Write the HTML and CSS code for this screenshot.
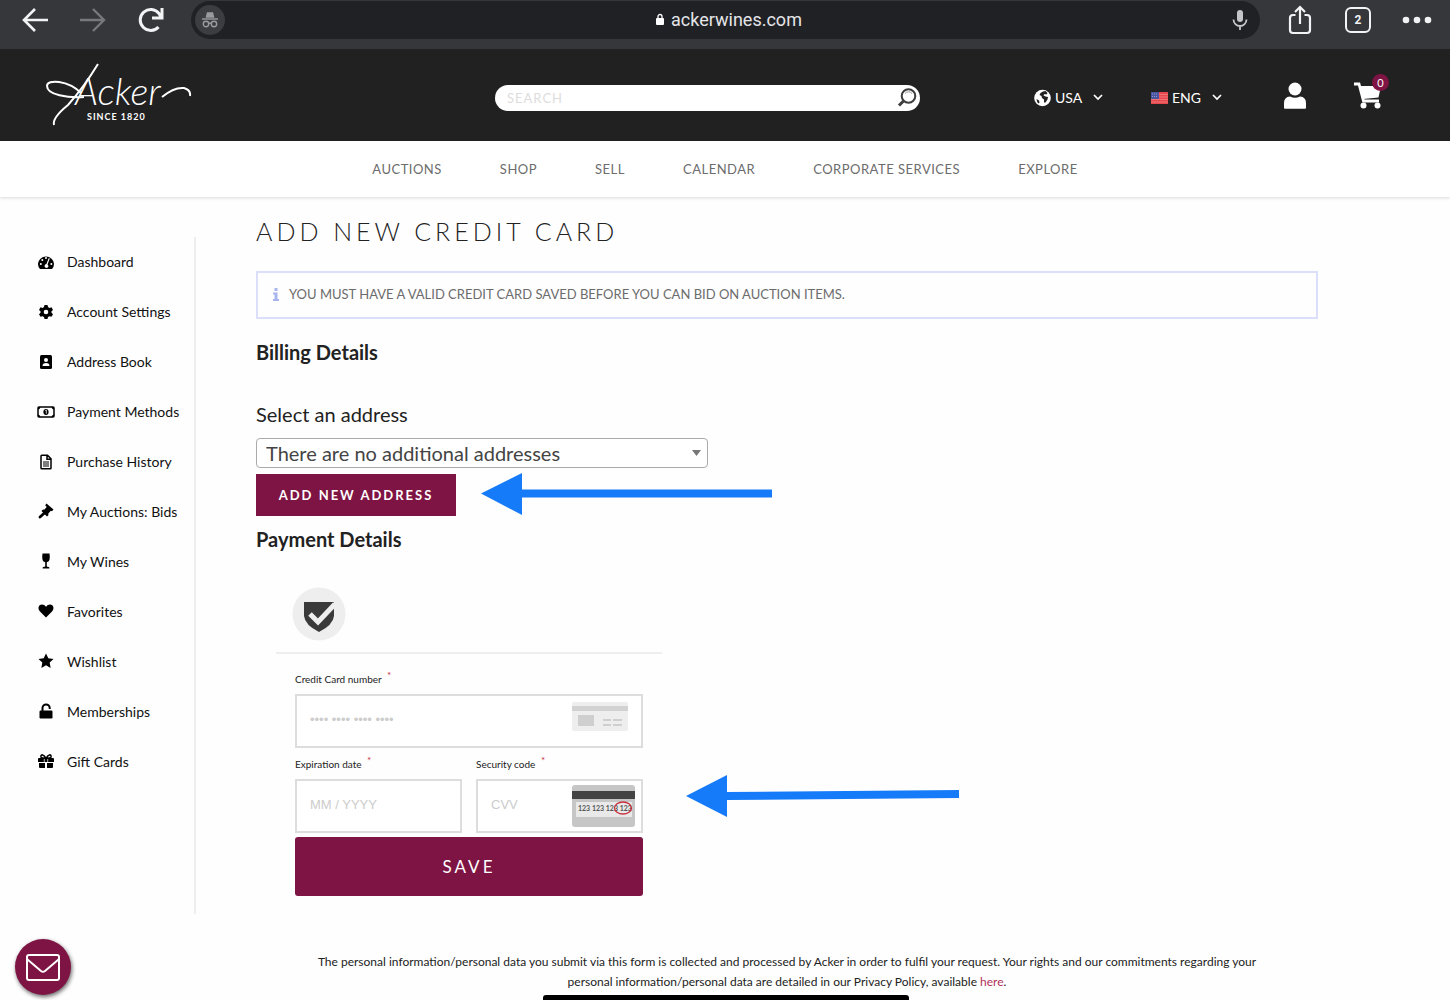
FILE: index.html
```html
<!DOCTYPE html>
<html lang="en">
<head>
  <meta charset="UTF-8" />
  <meta name="viewport" content="width=device-width, initial-scale=1.0"/>
  <title>Add New Credit Card</title>
  <link rel="stylesheet" href="styles.css">
</head>
<body>
<div class="browser-bar">
  <button class="bar-btn" aria-label="Back"><svg width="28" height="26" viewBox="0 0 28 26" fill="none" stroke="#f1f3f4" stroke-width="2.6"><path d="M27 13H3M14 2L3 13l11 11"/></svg></button>
  <button class="bar-btn" aria-label="Forward"><svg width="28" height="26" viewBox="0 0 28 26" fill="none" stroke="#77787b" stroke-width="2.4"><path d="M1 13h24M14 2l11 11-11 11"/></svg></button>
  <button class="bar-btn" aria-label="Reload"><svg width="28" height="26" viewBox="0 0 28 26" fill="none" stroke="#f1f3f4" stroke-width="3"><path d="M21.500 20A10.500 10.500 0 1 1 22 6.500L24 10M25 1v10H15"/></svg></button>
  <div class="address-bar">
    <span class="incognito">
      <svg width="18" height="18" viewBox="0 0 18 18" fill="none" stroke="#9a9b9e" stroke-width="1.4"><path d="M5.500 6L6.500 2h5l1 4z" fill="#9a9b9e"/><path d="M1 8h16"/><circle cx="5" cy="13" r="2.700"/><circle cx="13" cy="13" r="2.700"/><path d="M7.700 12.500q1.300-1 2.600 0"/></svg>
    </span>
    <span class="address">
      <svg width="10" height="13" viewBox="0 0 10 13"><rect x="1" y="5" width="8" height="7" rx="1" fill="#fff"/><path d="M3 5.500V3.500a2 2 0 0 1 4 0v2" fill="none" stroke="#fff" stroke-width="1.300"/></svg>
      ackerwines.com
    </span>
    <button class="bar-btn mic" aria-label="Voice search"><svg width="16" height="22" viewBox="0 0 16 22"><rect x="5" y="1" width="6" height="12" rx="3" fill="#c4c5c8"/><path d="M1.500 10.500a6.500 6.500 0 0 0 13 0M8 17v4" fill="none" stroke="#c4c5c8" stroke-width="1.800"/></svg></button>
  </div>
  <button class="bar-btn" aria-label="Share"><svg width="24" height="30" viewBox="0 0 24 30" fill="none" stroke="#f1f3f4" stroke-width="2.200"><path d="M7.500 10H5a3 3 0 0 0-3 3v12a3 3 0 0 0 3 3h14a3 3 0 0 0 3-3V13a3 3 0 0 0-3-3h-2.500M12 19V2M7 7l5-5 5 5"/></svg></button>
  <button class="tabs-btn" aria-label="Tabs">2</button>
  <button class="bar-btn" aria-label="More"><svg width="30" height="8" viewBox="0 0 30 8" fill="#f1f3f4"><circle cx="4" cy="4" r="3.300"/><circle cx="15" cy="4" r="3.300"/><circle cx="26" cy="4" r="3.300"/></svg></button>
</div>

<header class="header">
  <a class="logo" href="#" aria-label="Acker since 1820">
    <svg width="146" height="64" viewBox="0 0 146 64">
      <path d="M38 34C22 35 1 32 1 23C1 16 22 17 35 30M52 1Q38 24 22 42Q6 55 8 62" fill="none" stroke="#fff" stroke-width="2"/>
      <text x="29" y="42" class="logo-name">Acker</text>
      <path d="M116 34Q128 24 138 25Q145 27 144 33" fill="none" stroke="#fff" stroke-width="2"/>
      <text x="41" y="57" class="logo-since">SINCE 1820</text>
    </svg>
  </a>
  <form class="search">
    <input type="text" placeholder="SEARCH" aria-label="Search">
    <button type="button" aria-label="Search"><svg width="20" height="20" viewBox="0 0 20 20" fill="none" stroke="#3d3d3d"><circle cx="11.500" cy="8" r="6.800" stroke-width="2"/><path d="M8 5.500a4.500 4.500 0 0 1 7 0" stroke="#999" stroke-width="1"/><path d="M6.500 13L2 17.500" stroke-width="3"/></svg></button>
  </form>
  <div class="header-tools">
    <label class="picker">
      <svg width="17" height="18" viewBox="0 0 17 18"><circle cx="8.500" cy="9" r="8.300" fill="#fff"/><path d="M9 2.500l2.500-.5 2 2-1 1.500-2-.5-1 1.500 2 1 2.500.5-.5 2.500-2 3-1.500 0 0-3-2-1.500-.5-2-2-1 1-2z" fill="#222"/><path d="M2.500 10l2.500 1.500.5 2-1 1q-1.800-1.500-2-4.500z" fill="#222"/></svg>
      <select aria-label="Country"><option>USA</option></select>
      <svg class="chev" width="10" height="7" viewBox="0 0 10 7" fill="none" stroke="#fff" stroke-width="1.700"><path d="M1 1l4 4 4-4"/></svg>
    </label>
    <label class="picker picker-lang">
      <svg width="17" height="12" viewBox="0 0 17 12"><rect width="17" height="12" fill="#e5484d"/><path d="M0 2.500h17M0 5h17M0 7.500h17M0 10h17" stroke="#f08a8a" stroke-width=".7"/><rect width="8" height="7" fill="#4a55a0"/><path d="M1 2h6M1 4.500h6" stroke="#a5abd8" stroke-width=".8" stroke-dasharray="1 1"/></svg>
      <select aria-label="Language"><option>ENG</option></select>
      <svg class="chev" width="10" height="7" viewBox="0 0 10 7" fill="none" stroke="#fff" stroke-width="1.700"><path d="M1 1l4 4 4-4"/></svg>
    </label>
    <a class="user" href="#" aria-label="My account"><svg width="24" height="27" viewBox="0 0 24 27" fill="#fff"><circle cx="12" cy="7" r="6.500"/><path d="M1 26v-5q0-6 6-6.500Q12 17 17 14.500q6 .5 6 6.500v5q0 .8-1 .8H2q-1 0-1-.8z"/></svg></a>
    <a class="cart" href="#" aria-label="Cart"><svg width="29" height="27" viewBox="0 0 29 27"><path d="M1 2h5l4.500 17H26" fill="none" stroke="#fff" stroke-width="2.800"/><path d="M6 4h22l-2.500 11.500L10 17z" fill="#fff"/><circle cx="10.500" cy="23.500" r="3" fill="#fff"/><circle cx="24.500" cy="23.500" r="3" fill="#fff"/></svg><span class="badge">0</span></a>
  </div>
</header>

<nav class="nav">
  <a href="#">AUCTIONS</a>
  <a href="#">SHOP</a>
  <a href="#">SELL</a>
  <a href="#">CALENDAR</a>
  <a href="#">CORPORATE SERVICES</a>
  <a href="#">EXPLORE</a>
</nav>

<div class="page">
  <aside class="sidebar">
    <a href="#"><svg viewBox="0 0 18 16"><path d="M3 15A8 7.500 0 1 1 15 15z"/><g fill="#fff"><circle cx="3.800" cy="10" r="1"/><circle cx="5.300" cy="6" r="1"/><circle cx="9" cy="4" r="1"/><circle cx="14.300" cy="10" r="1"/><path d="M11.800 4l1 .4-2.300 6a1.900 1.900 0 1 1-1.100-.3z"/></g></svg>Dashboard</a>
    <a href="#"><svg viewBox="0 0 18 16"><path d="M7.500 1h3l.5 2 1.500.9 2-.6 1.500 2.600-1.500 1.400v1.500l1.500 1.400-1.500 2.600-2-.6-1.500.9-.5 2h-3L7 13.100l-1.500-.9-2 .6L2 10.200l1.500-1.400V7.300L2 5.900l1.500-2.600 2 .6L7 3z"/><circle cx="9" cy="8" r="2.300" fill="#fff"/></svg>Account Settings</a>
    <a href="#"><svg viewBox="0 0 18 16"><rect x="3" y="1" width="12" height="14" rx="1.500"/><circle cx="9" cy="6" r="2" fill="#fff"/><path d="M5.500 12q0-3 3.500-3t3.500 3z" fill="#fff"/></svg>Address Book</a>
    <a href="#"><svg viewBox="0 0 18 16"><rect x="1" y="3" width="16" height="10" rx="1" fill="none" stroke="#000" stroke-width="1.500"/><path d="M1 5.500q2 0 2.500-2.500H1zM17 5.500q-2 0-2.500-2.500H17zM1 10.500q2 0 2.500 2.500H1zM17 10.500q-2 0-2.500 2.500H17z"/><ellipse cx="9" cy="8" rx="2.600" ry="3"/><path d="M8.300 6.500L9.300 6v3.700" stroke="#fff" stroke-width=".8" fill="none"/></svg>Payment Methods</a>
    <a href="#"><svg viewBox="0 0 18 16"><path d="M4 2q0-.8.800-.8h5.700L14 4.700V14q0 .8-.8.800H4.800Q4 14.800 4 14zM10 1.500v3.700h3.700" fill="none" stroke="#000" stroke-width="1.500"/><path d="M6 8h6M6 10h6M6 12h6" stroke="#000" stroke-width="1"/></svg>Purchase History</a>
    <a href="#"><svg viewBox="0 0 18 16"><path d="M9.500 0.500l7 6-1.500 1.700-1.200-.4-2.600 2.900.3 1.200-1.500 1.500L4.500 8l1.500-1.500 1.200.3L9.700 4 8.200 2.200z"/><path d="M8 9.500L3 14" stroke="#000" stroke-width="2.800" stroke-linecap="round"/></svg>My Auctions: Bids</a>
    <a href="#"><svg viewBox="0 0 18 16"><path d="M5.500 0.500h7q1.300 8-2.700 8.700v4.300l2.500.7v1.300H5.700v-1.300l2.500-.7V9.200q-4-.7-2.700-8.700z"/></svg>My Wines</a>
    <a href="#"><svg viewBox="0 0 18 16"><path d="M9 14.500L3 8.500C0 5 2 1.500 5 1.500q2.500 0 4 2.200q1.500-2.200 4-2.200c3 0 5 3.500 2 7z"/></svg>Favorites</a>
    <a href="#"><svg viewBox="0 0 18 16"><path d="M9 0.500l2.300 4.800 5.200.7-3.800 3.600.9 5.300L9 12.300l-4.600 2.600.9-5.300L1.500 6l5.200-.7z"/></svg>Wishlist</a>
    <a href="#"><svg viewBox="0 0 18 16"><rect x="2.500" y="7.500" width="13" height="8" rx="1.200"/><path d="M5.500 8V5a3.600 3.600 0 0 1 7.200 0v1" fill="none" stroke="#000" stroke-width="2"/></svg>Memberships</a>
    <a href="#"><svg viewBox="0 0 18 16"><path d="M2 5h14q1 0 1 1v3H1V6q0-1 1-1zM2 10h6v5H3q-1 0-1-1zM10 10h6v4q0 1-1 1h-5z"/><path d="M9 5.500C7 1 3.500 1 4 4q.3 1.300 5 1.500C11 1 14.500 1 14 4q-.3 1.300-5 1.500" fill="none" stroke="#000" stroke-width="1.600"/><path d="M7.300 6v3M10.700 6v3" stroke="#fff" stroke-width=".7"/></svg>Gift Cards</a>
  </aside>

  <main class="content">
    <h1>ADD NEW CREDIT CARD</h1>
    <div class="notice">
      <svg width="6" height="13" viewBox="0 0 6 13" fill="#a9b6ee"><rect x="1.500" width="3" height="3"/><path d="M0 4.500h4.500V11H6v2H0v-2h1.500V6.500H0z"/></svg>
      YOU MUST HAVE A VALID CREDIT CARD SAVED BEFORE YOU CAN BID ON AUCTION ITEMS.
    </div>

    <h2>Billing Details</h2>
    <label class="address-label" for="addressSelect">Select an address</label>
    <div class="address-select">
      <select id="addressSelect"><option>There are no additional addresses</option></select>
      <svg width="9" height="6" viewBox="0 0 9 6" fill="#777"><path d="M0 0h9L4.500 6z"/></svg>
    </div>
    <div class="pointer-row">
      <button class="add-btn">ADD NEW ADDRESS</button>
      <svg class="arrow arrow-address" width="291" height="42" viewBox="0 0 291 42" fill="#167bf8"><path d="M0 20.500L41 0v16.500h250v8H41V42z"/></svg>
    </div>

    <h2>Payment Details</h2>
    <form class="card-form">
      <div class="secure">
        <svg width="54" height="54" viewBox="0 0 54 54"><circle cx="27" cy="27" r="26.500" fill="#eee"/><path d="M12 15h30v14q-1 9-15 16q-14-7-15-16z" fill="#3a3a3a"/><path d="M18 27l8 8 17-18" fill="none" stroke="#eee" stroke-width="5"/></svg>
      </div>
      <div class="fields">
        <div class="field field-wide">
          <label for="cardNumber">Credit Card number <sup>*</sup></label>
          <div class="input-box">
            <input type="text" id="cardNumber" placeholder="•••• •••• •••• ••••">
            <svg width="63" height="42" viewBox="0 0 63 42"><rect y="2" width="56" height="29" rx="2" fill="#eee"/><path d="M0 6h56v5H0z" fill="#d2d2d2"/><path d="M6 15h16v11H6z" fill="#cfcfcf"/><path d="M31 20h8M41 20h9M31 25h8M41 25h9" stroke="#cfcfcf" stroke-width="2"/></svg>
          </div>
        </div>
        <div class="field">
          <label for="expiry">Expiration date <sup>*</sup></label>
          <div class="input-box"><input type="text" id="expiry" placeholder="MM / YYYY"></div>
        </div>
        <div class="field">
          <label for="cvv">Security code <sup>*</sup></label>
          <div class="input-box">
            <input type="text" id="cvv" placeholder="CVV">
            <svg width="63" height="42" viewBox="0 0 63 42"><rect width="63" height="42" rx="3" fill="#c6c6c6"/><path d="M0 6h63v8H0z" fill="#444"/><path d="M4 17h56v15H4z" fill="#e9e9e9"/><text x="6" y="26" class="card-digits">123 123 123 123</text><ellipse cx="51" cy="23" rx="8.500" ry="6" fill="none" stroke="#c9303e" stroke-width="1.300"/></svg>
          </div>
          <svg class="arrow arrow-card" width="273" height="42" viewBox="0 0 273 42" fill="#167bf8"><path d="M0 21L41 0v17l232-2v8L41 25v17z"/></svg>
        </div>
      </div>
      <button class="save-btn" type="button">SAVE</button>
    </form>

    <p class="privacy">The personal information/personal data you submit via this form is collected and processed by Acker in order to fulfil your request. Your rights and our commitments regarding your personal information/personal data are detailed in our Privacy Policy, available <a href="#">here</a>.</p>
  </main>
</div>

<button class="mail-btn" aria-label="Contact us"><svg width="34" height="27" viewBox="0 0 34 27" fill="none" stroke="#fff" stroke-width="2"><rect x="1" y="1" width="32" height="25" rx="2"/><path d="M1.500 5.500L15 17q2 1.500 4 0L32.500 5.500"/></svg></button>
<div class="home-indicator"></div>
</body>
</html>
```
FILE: styles.css
```css
* {
  box-sizing: border-box;
}
body {
  margin: 0;
  background-color: #fefefe;
  color: #222;
  font-family: Lato, 'Open Sans', sans-serif;
}
a {
  color: inherit;
  text-decoration: none;
}
button, input, select {
  font-family: inherit;
  border: none;
  padding: 0;
  background: none;
}
button {
  cursor: pointer;
}
svg {
  display: block;
  flex-shrink: 0;
}

/* browser bar */
.browser-bar {
  height: 49px;
  background-color: #36373b;
  display: flex;
  align-items: center;
  gap: 30px;
  padding: 0 18px 10px 21px;
}
.address-bar {
  flex: 1;
  height: 38px;
  margin: 0 -2px 0 -4px;
  border-radius: 19px;
  background-color: #202125;
  display: flex;
  align-items: center;
  justify-content: space-between;
  padding: 0 12px 0 4px;
}
.incognito {
  width: 30px;
  height: 30px;
  border-radius: 50%;
  background-color: #3c3d41;
  display: flex;
  align-items: center;
  justify-content: center;
}
.address {
  display: flex;
  align-items: center;
  gap: 6px;
  font-family: Roboto, sans-serif;
  font-size: 18px;
  color: #e4e5e8;
}
.tabs-btn {
  width: 26px;
  height: 26px;
  margin: 0 1px 0 3px;
  border: 2px solid #f1f3f4;
  border-radius: 6px;
  color: #f1f3f4;
  font-family: Roboto, sans-serif;
  font-size: 12px;
  font-weight: bold;
}

/* site header */
.header {
  height: 92px;
  background-color: #212121;
  display: flex;
  align-items: center;
  padding: 0 68px 0 46px;
}
.logo-name {
  font-size: 38px;
  font-weight: 300;
  font-style: italic;
  fill: #fff;
}
.logo-since {
  font-size: 9px;
  font-weight: bold;
  letter-spacing: 1px;
  fill: #fff;
}
.search {
  width: 425px;
  height: 26px;
  margin: 6px auto 0 303px;
  border-radius: 13px;
  background-color: #fff;
  display: flex;
  align-items: center;
  padding: 0 3px 0 12px;
}
.search input {
  flex: 1;
  font-size: 13px;
  letter-spacing: 1px;
  outline: none;
}
.search input::placeholder {
  color: #ddd;
}
.header-tools {
  display: flex;
  align-items: center;
  color: #fff;
}
.picker {
  display: flex;
  align-items: center;
  gap: 4px;
  margin: 5px 48px 0 0;
}
.picker-lang {
  margin-right: 61px;
}
.picker select {
  appearance: none;
  color: #fff;
  font-size: 14px;
}
.chev {
  margin-left: 6px;
}
.cart {
  position: relative;
  margin-left: 46px;
}
.badge {
  position: absolute;
  top: -8px;
  right: -7px;
  width: 17px;
  height: 17px;
  border-radius: 50%;
  background-color: #7e1443;
  font-size: 11px;
  line-height: 17px;
  text-align: center;
}
.nav {
  height: 56px;
  background-color: #fff;
  box-shadow: 0 1px 3px rgba(0,0,0,0.15);
  display: flex;
  justify-content: center;
  align-items: center;
  gap: 58px;
  font-size: 13px;
  letter-spacing: 0.5px;
  color: #6c6c6c;
}

/* account page */
.page {
  display: flex;
}
.sidebar {
  width: 196px;
  height: 677px;
  margin-top: 40px;
  padding-bottom: 128px;
  border-right: 2px solid #eee;
  flex-shrink: 0;
  display: flex;
  flex-direction: column;
}
.sidebar a {
  flex: 1;
  display: flex;
  align-items: center;
  gap: 12px;
  padding-left: 37px;
  font-size: 14px;
  color: #111;
}
.sidebar svg {
  width: 18px;
  height: 16px;
}
.content {
  flex: 1;
  margin: 0 132px 0 60px;
}
h1 {
  margin: 17px 0 23px;
  font-size: 25px;
  line-height: 34px;
  font-weight: 300;
  letter-spacing: 4px;
}
.notice {
  height: 48px;
  border: 2px solid #dcdffa;
  display: flex;
  align-items: center;
  gap: 10px;
  padding: 0 15px 2px;
  font-size: 13px;
  color: #6c6c6c;
}
h2 {
  margin: 20px 0 0;
  font-size: 20px;
  line-height: 26px;
}
.address-label {
  display: block;
  margin: 36px 0 11px;
  font-size: 20px;
  line-height: 26px;
}
.address-select {
  position: relative;
  width: 452px;
}
.address-select select {
  appearance: none;
  width: 100%;
  height: 30px;
  padding-left: 9px;
  border: 1px solid #aaa;
  border-radius: 4px;
  background-color: #fff;
  color: #444;
  font-size: 20px;
}
.address-select svg {
  position: absolute;
  right: 7px;
  top: 12px;
}
.pointer-row {
  position: relative;
  margin: 6px 0 -10px;
}
.add-btn {
  display: block;
  width: 200px;
  height: 42px;
  background-color: #7e1443;
  color: #fff;
  font-size: 13px;
  font-weight: bold;
  letter-spacing: 2px;
}
.arrow {
  position: absolute;
}
.arrow-address {
  left: 225px;
  top: -1px;
}

/* card form */
.card-form {
  width: 386px;
  margin: 35px 0 0 20px;
}
.secure {
  padding: 0 0 11px 16px;
  border-bottom: 2px solid #eee;
}
.fields {
  display: grid;
  grid-template-columns: 167px minmax(0, 1fr);
  column-gap: 14px;
  margin: 15px 19px 4px;
}
.field {
  position: relative;
}
.field-wide {
  grid-column: 1 / 3;
}
.field label {
  display: block;
  height: 31px;
  padding-top: 7px;
  font-size: 10px;
  line-height: 18px;
}
.field-wide label {
  height: 25px;
  padding-top: 1px;
}
.field sup {
  margin-left: 3px;
  color: #c9303e;
  font-size: 10px;
  line-height: 0;
}
.input-box {
  height: 54px;
  border: 2px solid #ddd;
  background-color: #fff;
  display: flex;
  align-items: center;
  padding: 0 6px 0 13px;
}
.input-box input {
  flex: 1;
  min-width: 0;
  padding-bottom: 3px;
  font-family: 'Liberation Sans', sans-serif;
  font-size: 13px;
}
.input-box input::placeholder {
  color: #ccc;
}
.card-digits {
  font-size: 7px;
  font-weight: bold;
  fill: #555;
}
.arrow-card {
  left: 210px;
  top: 27px;
}
.save-btn {
  display: block;
  width: 348px;
  height: 59px;
  margin-left: 19px;
  border-radius: 3px;
  background-color: #7e1443;
  color: #fff;
  font-size: 17px;
  letter-spacing: 3px;
}
.privacy {
  margin: 56px 50px 0;
  text-align: center;
  font-size: 12px;
  line-height: 20px;
}
.privacy a {
  color: #b0305c;
}

/* fixed overlays */
.mail-btn {
  position: fixed;
  left: 15px;
  bottom: 5px;
  width: 56px;
  height: 56px;
  border-radius: 50%;
  background-color: #7e1443;
  box-shadow: 1px 2px 4px rgba(0,0,0,0.6);
  display: flex;
  align-items: center;
  justify-content: center;
}
.home-indicator {
  position: fixed;
  left: 50%;
  bottom: 0;
  width: 366px;
  height: 5px;
  margin-left: -182px;
  border-radius: 3px 3px 0 0;
  background-color: #000;
}
```
